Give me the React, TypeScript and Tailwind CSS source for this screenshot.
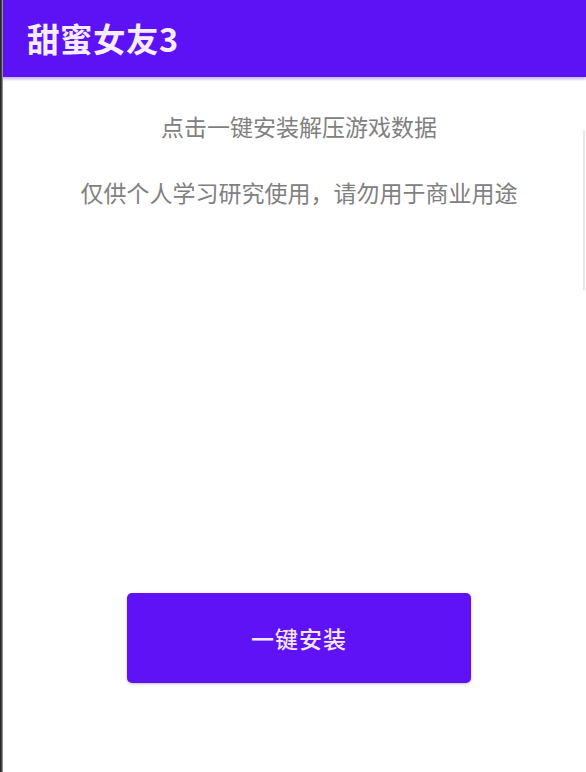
import React from "react";

export default function App() {
  return (
    <div
      className="relative w-[586px] h-[772px] bg-white overflow-hidden flex flex-col"
      style={{ fontFamily: '"Noto Sans CJK SC", "Noto Sans", sans-serif' }}
    >
      <div className="absolute left-0 top-0 bottom-0 w-[3px] bg-gradient-to-r from-[#1e1e1e] via-[#444] to-[#bbb]" />
      <header className="h-[77px] shrink-0 bg-[#5d12f5] flex items-center pl-[27px] shadow-[0_2px_3px_rgba(90,20,200,0.35)]">
        <h1 className="text-[32.5px] leading-none font-bold text-[#f6ecff] tracking-[0.5px]">甜蜜女友3</h1>
      </header>
      <main className="flex flex-col items-center">
        <p className="mt-[34px] text-[23px] leading-[30px] text-[#808080] pl-[12px]">点击一键安装解压游戏数据</p>
        <p className="mt-[36px] text-[23px] leading-[30px] text-[#808080] pl-[12px]">仅供个人学习研究使用，请勿用于商业用途</p>
        <button className="mt-[386px] ml-[12px] w-[344px] h-[90px] rounded-[5px] bg-[#5e12f5] text-[#f3e6ff] text-[23px] font-medium tracking-[1px] flex items-center justify-center shadow-[0_1px_3px_rgba(0,0,0,0.25)]">
          一键安装
        </button>
      </main>
      <div className="absolute right-[1px] top-[130px] h-[160px] w-[2px] bg-[#e8e8e8]" />
    </div>
  );
}
